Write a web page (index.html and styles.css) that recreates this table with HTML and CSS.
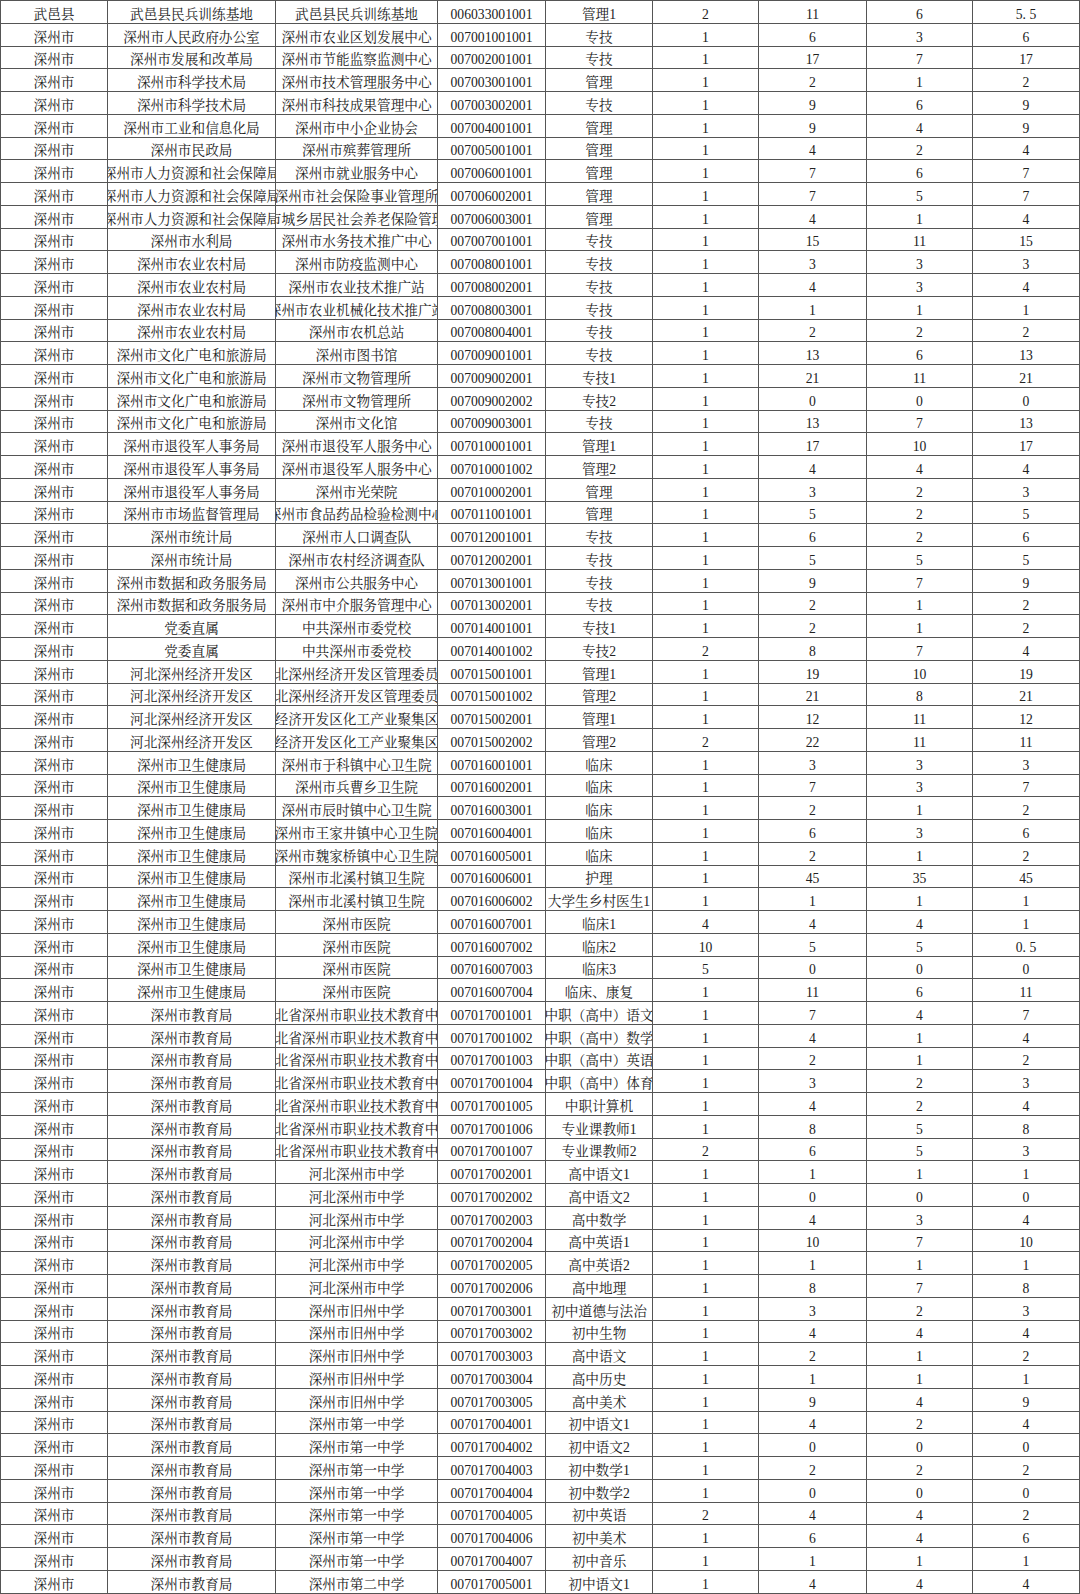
FILE: index.html
```html
<!DOCTYPE html>
<html lang="zh-CN">
<head>
<meta charset="utf-8">
<title>岗位报名统计</title>
<link rel="stylesheet" href="styles.css">
</head>
<body>
<div class="sheet">
<div class="row"><div>武邑县</div><div>武邑县民兵训练基地</div><div>武邑县民兵训练基地</div><div>006033001001</div><div>管理1</div><div>2</div><div>11</div><div>6</div><div>5<span class="dot">.</span>5</div></div>
<div class="row"><div>深州市</div><div>深州市人民政府办公室</div><div>深州市农业区划发展中心</div><div>007001001001</div><div>专技</div><div>1</div><div>6</div><div>3</div><div>6</div></div>
<div class="row"><div>深州市</div><div>深州市发展和改革局</div><div>深州市节能监察监测中心</div><div>007002001001</div><div>专技</div><div>1</div><div>17</div><div>7</div><div>17</div></div>
<div class="row"><div>深州市</div><div>深州市科学技术局</div><div>深州市技术管理服务中心</div><div>007003001001</div><div>管理</div><div>1</div><div>2</div><div>1</div><div>2</div></div>
<div class="row"><div>深州市</div><div>深州市科学技术局</div><div>深州市科技成果管理中心</div><div>007003002001</div><div>专技</div><div>1</div><div>9</div><div>6</div><div>9</div></div>
<div class="row"><div>深州市</div><div>深州市工业和信息化局</div><div>深州市中小企业协会</div><div>007004001001</div><div>管理</div><div>1</div><div>9</div><div>4</div><div>9</div></div>
<div class="row"><div>深州市</div><div>深州市民政局</div><div>深州市殡葬管理所</div><div>007005001001</div><div>管理</div><div>1</div><div>4</div><div>2</div><div>4</div></div>
<div class="row"><div>深州市</div><div>深州市人力资源和社会保障局</div><div>深州市就业服务中心</div><div>007006001001</div><div>管理</div><div>1</div><div>7</div><div>6</div><div>7</div></div>
<div class="row"><div>深州市</div><div>深州市人力资源和社会保障局</div><div>深州市社会保险事业管理所</div><div>007006002001</div><div>管理</div><div>1</div><div>7</div><div>5</div><div>7</div></div>
<div class="row"><div>深州市</div><div>深州市人力资源和社会保障局</div><div>深州市城乡居民社会养老保险管理中心</div><div>007006003001</div><div>管理</div><div>1</div><div>4</div><div>1</div><div>4</div></div>
<div class="row"><div>深州市</div><div>深州市水利局</div><div>深州市水务技术推广中心</div><div>007007001001</div><div>专技</div><div>1</div><div>15</div><div>11</div><div>15</div></div>
<div class="row"><div>深州市</div><div>深州市农业农村局</div><div>深州市防疫监测中心</div><div>007008001001</div><div>专技</div><div>1</div><div>3</div><div>3</div><div>3</div></div>
<div class="row"><div>深州市</div><div>深州市农业农村局</div><div>深州市农业技术推广站</div><div>007008002001</div><div>专技</div><div>1</div><div>4</div><div>3</div><div>4</div></div>
<div class="row"><div>深州市</div><div>深州市农业农村局</div><div>深州市农业机械化技术推广站</div><div>007008003001</div><div>专技</div><div>1</div><div>1</div><div>1</div><div>1</div></div>
<div class="row"><div>深州市</div><div>深州市农业农村局</div><div>深州市农机总站</div><div>007008004001</div><div>专技</div><div>1</div><div>2</div><div>2</div><div>2</div></div>
<div class="row"><div>深州市</div><div>深州市文化广电和旅游局</div><div>深州市图书馆</div><div>007009001001</div><div>专技</div><div>1</div><div>13</div><div>6</div><div>13</div></div>
<div class="row"><div>深州市</div><div>深州市文化广电和旅游局</div><div>深州市文物管理所</div><div>007009002001</div><div>专技1</div><div>1</div><div>21</div><div>11</div><div>21</div></div>
<div class="row"><div>深州市</div><div>深州市文化广电和旅游局</div><div>深州市文物管理所</div><div>007009002002</div><div>专技2</div><div>1</div><div>0</div><div>0</div><div>0</div></div>
<div class="row"><div>深州市</div><div>深州市文化广电和旅游局</div><div>深州市文化馆</div><div>007009003001</div><div>专技</div><div>1</div><div>13</div><div>7</div><div>13</div></div>
<div class="row"><div>深州市</div><div>深州市退役军人事务局</div><div>深州市退役军人服务中心</div><div>007010001001</div><div>管理1</div><div>1</div><div>17</div><div>10</div><div>17</div></div>
<div class="row"><div>深州市</div><div>深州市退役军人事务局</div><div>深州市退役军人服务中心</div><div>007010001002</div><div>管理2</div><div>1</div><div>4</div><div>4</div><div>4</div></div>
<div class="row"><div>深州市</div><div>深州市退役军人事务局</div><div>深州市光荣院</div><div>007010002001</div><div>管理</div><div>1</div><div>3</div><div>2</div><div>3</div></div>
<div class="row"><div>深州市</div><div>深州市市场监督管理局</div><div>深州市食品药品检验检测中心</div><div>007011001001</div><div>管理</div><div>1</div><div>5</div><div>2</div><div>5</div></div>
<div class="row"><div>深州市</div><div>深州市统计局</div><div>深州市人口调查队</div><div>007012001001</div><div>专技</div><div>1</div><div>6</div><div>2</div><div>6</div></div>
<div class="row"><div>深州市</div><div>深州市统计局</div><div>深州市农村经济调查队</div><div>007012002001</div><div>专技</div><div>1</div><div>5</div><div>5</div><div>5</div></div>
<div class="row"><div>深州市</div><div>深州市数据和政务服务局</div><div>深州市公共服务中心</div><div>007013001001</div><div>专技</div><div>1</div><div>9</div><div>7</div><div>9</div></div>
<div class="row"><div>深州市</div><div>深州市数据和政务服务局</div><div>深州市中介服务管理中心</div><div>007013002001</div><div>专技</div><div>1</div><div>2</div><div>1</div><div>2</div></div>
<div class="row"><div>深州市</div><div>党委直属</div><div>中共深州市委党校</div><div>007014001001</div><div>专技1</div><div>1</div><div>2</div><div>1</div><div>2</div></div>
<div class="row"><div>深州市</div><div>党委直属</div><div>中共深州市委党校</div><div>007014001002</div><div>专技2</div><div>2</div><div>8</div><div>7</div><div>4</div></div>
<div class="row"><div>深州市</div><div>河北深州经济开发区</div><div>河北深州经济开发区管理委员会</div><div>007015001001</div><div>管理1</div><div>1</div><div>19</div><div>10</div><div>19</div></div>
<div class="row"><div>深州市</div><div>河北深州经济开发区</div><div>河北深州经济开发区管理委员会</div><div>007015001002</div><div>管理2</div><div>1</div><div>21</div><div>8</div><div>21</div></div>
<div class="row"><div>深州市</div><div>河北深州经济开发区</div><div>河北深州经济开发区化工产业聚集区服务中心</div><div>007015002001</div><div>管理1</div><div>1</div><div>12</div><div>11</div><div>12</div></div>
<div class="row"><div>深州市</div><div>河北深州经济开发区</div><div>河北深州经济开发区化工产业聚集区服务中心</div><div>007015002002</div><div>管理2</div><div>2</div><div>22</div><div>11</div><div>11</div></div>
<div class="row"><div>深州市</div><div>深州市卫生健康局</div><div>深州市于科镇中心卫生院</div><div>007016001001</div><div>临床</div><div>1</div><div>3</div><div>3</div><div>3</div></div>
<div class="row"><div>深州市</div><div>深州市卫生健康局</div><div>深州市兵曹乡卫生院</div><div>007016002001</div><div>临床</div><div>1</div><div>7</div><div>3</div><div>7</div></div>
<div class="row"><div>深州市</div><div>深州市卫生健康局</div><div>深州市辰时镇中心卫生院</div><div>007016003001</div><div>临床</div><div>1</div><div>2</div><div>1</div><div>2</div></div>
<div class="row"><div>深州市</div><div>深州市卫生健康局</div><div>深州市王家井镇中心卫生院</div><div>007016004001</div><div>临床</div><div>1</div><div>6</div><div>3</div><div>6</div></div>
<div class="row"><div>深州市</div><div>深州市卫生健康局</div><div>深州市魏家桥镇中心卫生院</div><div>007016005001</div><div>临床</div><div>1</div><div>2</div><div>1</div><div>2</div></div>
<div class="row"><div>深州市</div><div>深州市卫生健康局</div><div>深州市北溪村镇卫生院</div><div>007016006001</div><div>护理</div><div>1</div><div>45</div><div>35</div><div>45</div></div>
<div class="row"><div>深州市</div><div>深州市卫生健康局</div><div>深州市北溪村镇卫生院</div><div>007016006002</div><div>大学生乡村医生1</div><div>1</div><div>1</div><div>1</div><div>1</div></div>
<div class="row"><div>深州市</div><div>深州市卫生健康局</div><div>深州市医院</div><div>007016007001</div><div>临床1</div><div>4</div><div>4</div><div>4</div><div>1</div></div>
<div class="row"><div>深州市</div><div>深州市卫生健康局</div><div>深州市医院</div><div>007016007002</div><div>临床2</div><div>10</div><div>5</div><div>5</div><div>0<span class="dot">.</span>5</div></div>
<div class="row"><div>深州市</div><div>深州市卫生健康局</div><div>深州市医院</div><div>007016007003</div><div>临床3</div><div>5</div><div>0</div><div>0</div><div>0</div></div>
<div class="row"><div>深州市</div><div>深州市卫生健康局</div><div>深州市医院</div><div>007016007004</div><div>临床、康复</div><div>1</div><div>11</div><div>6</div><div>11</div></div>
<div class="row"><div>深州市</div><div>深州市教育局</div><div>河北省深州市职业技术教育中心</div><div>007017001001</div><div>中职（高中）语文</div><div>1</div><div>7</div><div>4</div><div>7</div></div>
<div class="row"><div>深州市</div><div>深州市教育局</div><div>河北省深州市职业技术教育中心</div><div>007017001002</div><div>中职（高中）数学</div><div>1</div><div>4</div><div>1</div><div>4</div></div>
<div class="row"><div>深州市</div><div>深州市教育局</div><div>河北省深州市职业技术教育中心</div><div>007017001003</div><div>中职（高中）英语</div><div>1</div><div>2</div><div>1</div><div>2</div></div>
<div class="row"><div>深州市</div><div>深州市教育局</div><div>河北省深州市职业技术教育中心</div><div>007017001004</div><div>中职（高中）体育</div><div>1</div><div>3</div><div>2</div><div>3</div></div>
<div class="row"><div>深州市</div><div>深州市教育局</div><div>河北省深州市职业技术教育中心</div><div>007017001005</div><div>中职计算机</div><div>1</div><div>4</div><div>2</div><div>4</div></div>
<div class="row"><div>深州市</div><div>深州市教育局</div><div>河北省深州市职业技术教育中心</div><div>007017001006</div><div>专业课教师1</div><div>1</div><div>8</div><div>5</div><div>8</div></div>
<div class="row"><div>深州市</div><div>深州市教育局</div><div>河北省深州市职业技术教育中心</div><div>007017001007</div><div>专业课教师2</div><div>2</div><div>6</div><div>5</div><div>3</div></div>
<div class="row"><div>深州市</div><div>深州市教育局</div><div>河北深州市中学</div><div>007017002001</div><div>高中语文1</div><div>1</div><div>1</div><div>1</div><div>1</div></div>
<div class="row"><div>深州市</div><div>深州市教育局</div><div>河北深州市中学</div><div>007017002002</div><div>高中语文2</div><div>1</div><div>0</div><div>0</div><div>0</div></div>
<div class="row"><div>深州市</div><div>深州市教育局</div><div>河北深州市中学</div><div>007017002003</div><div>高中数学</div><div>1</div><div>4</div><div>3</div><div>4</div></div>
<div class="row"><div>深州市</div><div>深州市教育局</div><div>河北深州市中学</div><div>007017002004</div><div>高中英语1</div><div>1</div><div>10</div><div>7</div><div>10</div></div>
<div class="row"><div>深州市</div><div>深州市教育局</div><div>河北深州市中学</div><div>007017002005</div><div>高中英语2</div><div>1</div><div>1</div><div>1</div><div>1</div></div>
<div class="row"><div>深州市</div><div>深州市教育局</div><div>河北深州市中学</div><div>007017002006</div><div>高中地理</div><div>1</div><div>8</div><div>7</div><div>8</div></div>
<div class="row"><div>深州市</div><div>深州市教育局</div><div>深州市旧州中学</div><div>007017003001</div><div>初中道德与法治</div><div>1</div><div>3</div><div>2</div><div>3</div></div>
<div class="row"><div>深州市</div><div>深州市教育局</div><div>深州市旧州中学</div><div>007017003002</div><div>初中生物</div><div>1</div><div>4</div><div>4</div><div>4</div></div>
<div class="row"><div>深州市</div><div>深州市教育局</div><div>深州市旧州中学</div><div>007017003003</div><div>高中语文</div><div>1</div><div>2</div><div>1</div><div>2</div></div>
<div class="row"><div>深州市</div><div>深州市教育局</div><div>深州市旧州中学</div><div>007017003004</div><div>高中历史</div><div>1</div><div>1</div><div>1</div><div>1</div></div>
<div class="row"><div>深州市</div><div>深州市教育局</div><div>深州市旧州中学</div><div>007017003005</div><div>高中美术</div><div>1</div><div>9</div><div>4</div><div>9</div></div>
<div class="row"><div>深州市</div><div>深州市教育局</div><div>深州市第一中学</div><div>007017004001</div><div>初中语文1</div><div>1</div><div>4</div><div>2</div><div>4</div></div>
<div class="row"><div>深州市</div><div>深州市教育局</div><div>深州市第一中学</div><div>007017004002</div><div>初中语文2</div><div>1</div><div>0</div><div>0</div><div>0</div></div>
<div class="row"><div>深州市</div><div>深州市教育局</div><div>深州市第一中学</div><div>007017004003</div><div>初中数学1</div><div>1</div><div>2</div><div>2</div><div>2</div></div>
<div class="row"><div>深州市</div><div>深州市教育局</div><div>深州市第一中学</div><div>007017004004</div><div>初中数学2</div><div>1</div><div>0</div><div>0</div><div>0</div></div>
<div class="row"><div>深州市</div><div>深州市教育局</div><div>深州市第一中学</div><div>007017004005</div><div>初中英语</div><div>2</div><div>4</div><div>4</div><div>2</div></div>
<div class="row"><div>深州市</div><div>深州市教育局</div><div>深州市第一中学</div><div>007017004006</div><div>初中美术</div><div>1</div><div>6</div><div>4</div><div>6</div></div>
<div class="row"><div>深州市</div><div>深州市教育局</div><div>深州市第一中学</div><div>007017004007</div><div>初中音乐</div><div>1</div><div>1</div><div>1</div><div>1</div></div>
<div class="row"><div>深州市</div><div>深州市教育局</div><div>深州市第二中学</div><div>007017005001</div><div>初中语文1</div><div>1</div><div>4</div><div>4</div><div>4</div></div>
</div>
</body>
</html>
```
FILE: styles.css
```css
html, body {
  margin: 0;
  padding: 0;
  background: #ffffff;
}

.sheet {
  width: 1080px;
  box-sizing: border-box;
  border-top: 1px solid #555555;
  border-left: 1px solid #555555;
  font-family: "Liberation Serif", "Noto Serif CJK SC", "Noto Sans CJK SC", serif;
  font-size: 13.67px;
  color: #222222;
}

.row {
  display: grid;
  grid-template-columns: 107px 168px 162px 108px 107px 106px 108px 106px 107px;
  height: 22.76px;
  box-sizing: border-box;
  border-bottom: 1px solid #555555;
}

.row > div {
  display: flex;
  justify-content: center;
  align-items: flex-end;
  overflow: hidden;
  white-space: nowrap;
  line-height: 14px;
  padding-bottom: 1px;
  box-sizing: border-box;
  border-right: 1px solid #555555;
}

.dot {
  display: inline-block;
  width: 0.5em;
  text-align: left;
}
```
